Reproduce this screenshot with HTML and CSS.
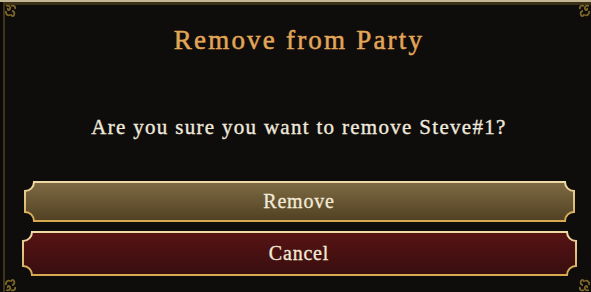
FILE: index.html
```html
<!DOCTYPE html>
<html lang="en">
<head>
    <title>Remove from Party</title>
    <link rel="stylesheet" href="styles.css">
</head>
<body>
    <div class="dialog">
        <svg class="corner corner-tl" width="14" height="14" viewBox="0 0 14 14"><path d="M2 2c3-1 5 1 4 3s-3 1-2-1M7 2c2-1 5 0 4 3M2 7c-1 3 2 5 4 4M8 7c2 0 3 2 2 4s-3 1-3-1" /></svg>
        <svg class="corner corner-tr" width="14" height="14" viewBox="0 0 14 14"><path d="M2 2c3-1 5 1 4 3s-3 1-2-1M7 2c2-1 5 0 4 3M2 7c-1 3 2 5 4 4M8 7c2 0 3 2 2 4s-3 1-3-1" /></svg>
        <svg class="corner corner-bl" width="14" height="14" viewBox="0 0 14 14"><path d="M2 2c3-1 5 1 4 3s-3 1-2-1M7 2c2-1 5 0 4 3M2 7c-1 3 2 5 4 4M8 7c2 0 3 2 2 4s-3 1-3-1" /></svg>
        <svg class="corner corner-br" width="14" height="14" viewBox="0 0 14 14"><path d="M2 2c3-1 5 1 4 3s-3 1-2-1M7 2c2-1 5 0 4 3M2 7c-1 3 2 5 4 4M8 7c2 0 3 2 2 4s-3 1-3-1" /></svg>

        <h1 class="title">Remove from Party</h1>
        <p class="message">Are you sure you want to remove Steve#1?</p>

        <div class="actions">
            <button class="btn btn-remove">
                <svg class="btn-shape" width="551" height="41" viewBox="0 0 551 41">
                    <defs>
                        <linearGradient id="removeFill" x1="0" y1="0" x2="0" y2="1">
                            <stop offset="0" stop-color="#7e6b44" />
                            <stop offset="1" stop-color="#514022" />
                        </linearGradient>
                        <linearGradient id="edge" x1="0" y1="0" x2="0" y2="1">
                            <stop offset="0" stop-color="#efdaa6" />
                            <stop offset="1" stop-color="#d6a850" />
                        </linearGradient>
                    </defs>
                    <path d="M10,1 H541 A9 9 0 0 0 550,10 V31 A9 9 0 0 0 541,40 H10 A9 9 0 0 0 1,31 V10 A9 9 0 0 0 10,1 Z" fill="url(#removeFill)" stroke="url(#edge)" stroke-width="2" />
                </svg>
                <span class="btn-label">Remove</span>
            </button>
            <button class="btn btn-cancel">
                <svg class="btn-shape" width="555" height="45" viewBox="0 0 555 45">
                    <defs>
                        <linearGradient id="cancelFill" x1="0" y1="0" x2="0" y2="1">
                            <stop offset="0" stop-color="#581314" />
                            <stop offset="1" stop-color="#380e0f" />
                        </linearGradient>
                    </defs>
                    <path d="M10,1 H545 A9 9 0 0 0 554,10 V35 A9 9 0 0 0 545,44 H10 A9 9 0 0 0 1,35 V10 A9 9 0 0 0 10,1 Z" fill="url(#cancelFill)" stroke="url(#edge)" stroke-width="2" />
                </svg>
                <span class="btn-label">Cancel</span>
            </button>
        </div>
    </div>
</body>
</html>
```

FILE: styles.css
```css
html, body {
    margin: 0;
    padding: 0;
    background-color: #0c0a09;
}

.dialog {
    position: relative;
    box-sizing: border-box;
    width: 591px;
    height: 292px;
    padding-left: 7px;
    border-top: 2px solid #c4b794;
    background-color: #0f0d0c;
    box-shadow: inset 3px 0 0 #0c0a09, inset 5px 0 0 #3f351a, inset 0 3px 0 #3a3018;
    font-family: "Liberation Serif", serif;
    overflow: hidden;
}

.corner {
    position: absolute;
    fill: none;
    stroke: #7d6629;
    stroke-width: 1.8;
}

.corner-tl { top: 2px; left: 4px; }
.corner-tr { top: 2px; right: 0; transform: scaleX(-1); }
.corner-bl { bottom: 0; left: 4px; transform: scaleY(-1); }
.corner-br { bottom: 0; right: 0; transform: scale(-1, -1); }

.title {
    margin: 23px 0 0;
    font-size: 27px;
    line-height: 30px;
    font-weight: normal;
    letter-spacing: 2.2px;
    color: #e2a658;
    -webkit-text-stroke: 0.5px #e2a658;
    text-align: center;
}

.message {
    margin: 60px 0 0;
    font-size: 21px;
    line-height: 24px;
    letter-spacing: 1.3px;
    color: #efe9dc;
    -webkit-text-stroke: 0.35px #efe9dc;
    text-align: center;
}

.actions {
    display: flex;
    flex-direction: column;
    align-items: center;
    gap: 9px;
    margin-top: 42px;
}

.btn {
    position: relative;
    display: flex;
    align-items: center;
    justify-content: center;
    padding: 0;
    border: none;
    background: none;
    cursor: pointer;
    font-family: "Liberation Serif", serif;
    font-size: 20px;
    letter-spacing: 0.8px;
    color: #f2ead6;
    -webkit-text-stroke: 0.3px #f2ead6;
}

.btn-remove {
    width: 551px;
    height: 41px;
}

.btn-cancel {
    width: 555px;
    height: 45px;
}

.btn-shape {
    position: absolute;
    top: 0;
    left: 0;
}

.btn-label {
    position: relative;
}
```
